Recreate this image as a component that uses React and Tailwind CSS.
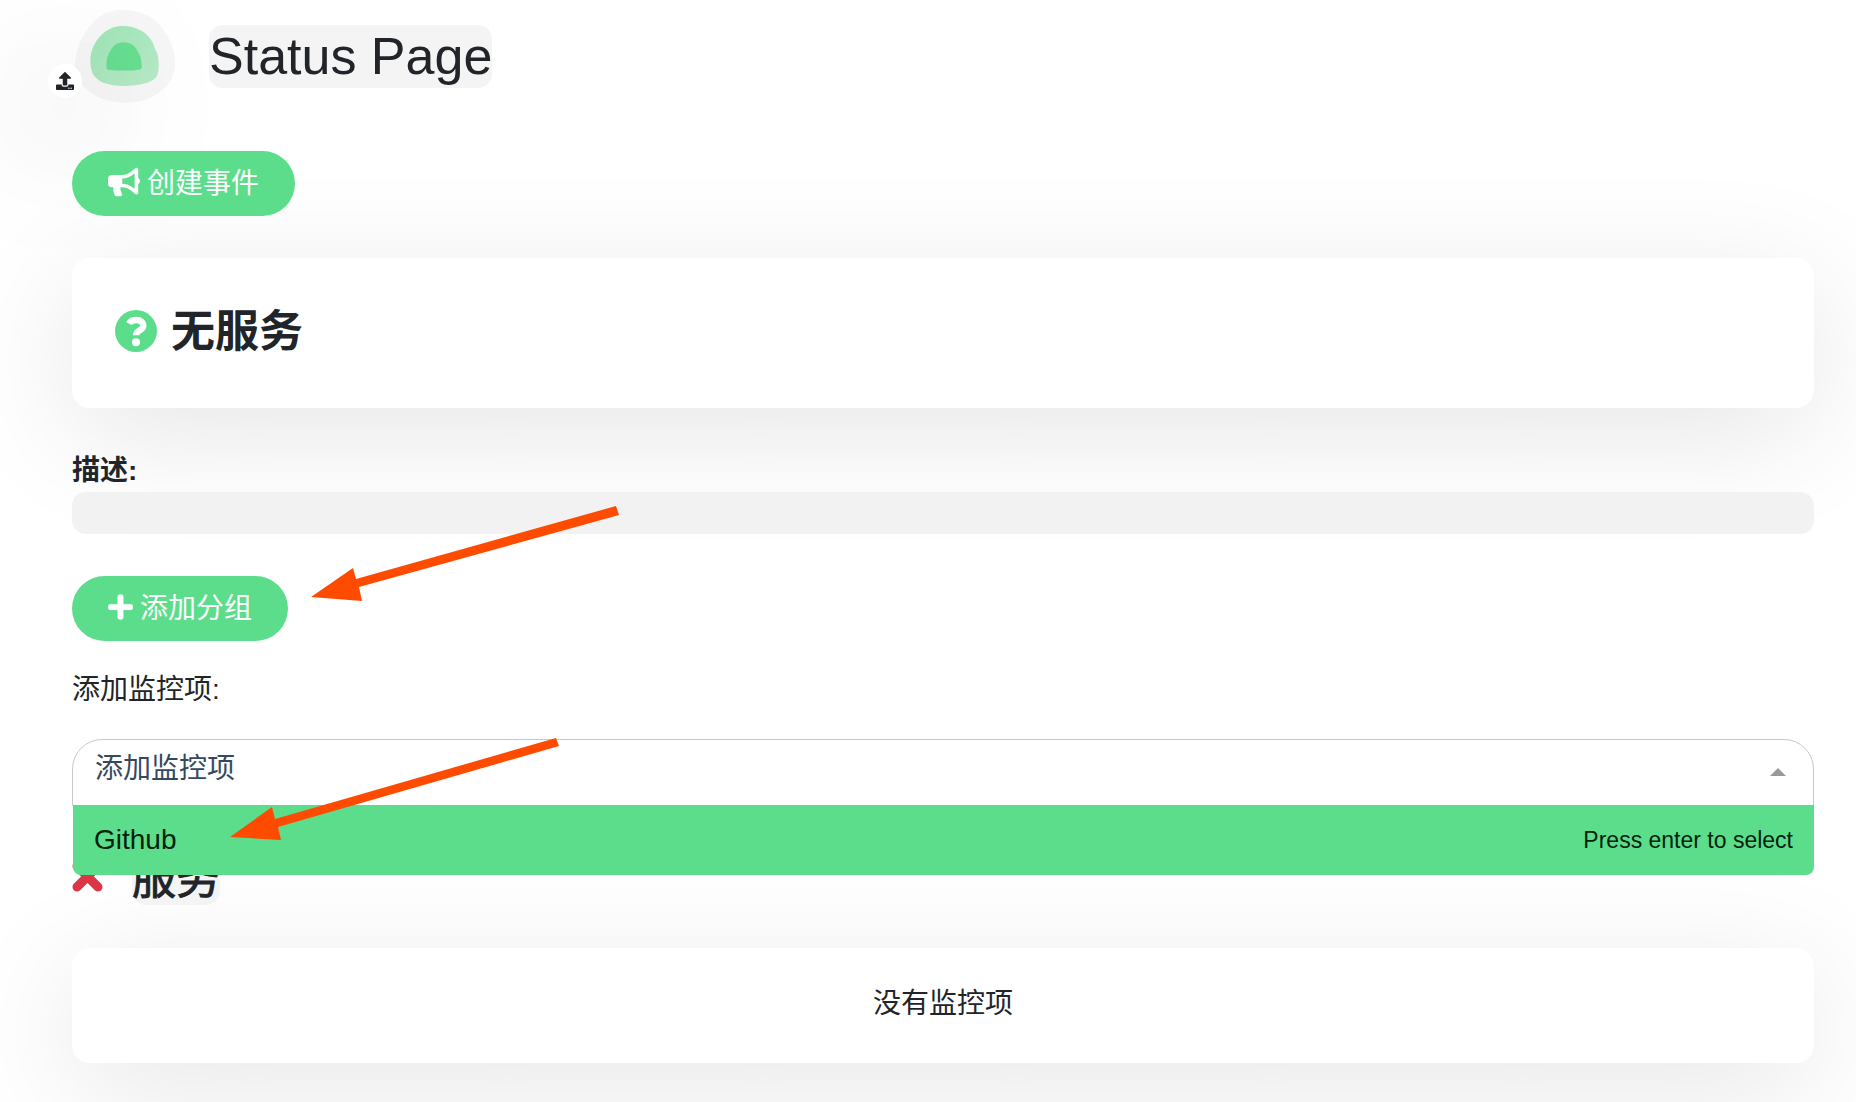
import { FaBullhorn, FaPlus, FaUpload } from "react-icons/fa";

function Logo() {
  return (
    <svg className="h-24 w-[102px]" viewBox="0 0 306 288" aria-hidden="true">
      <defs>
        <linearGradient id="mint" x1="0" y1="0" x2="1" y2="1">
          <stop offset="0" stopColor="#9ee5b5" />
          <stop offset="1" stopColor="#b9eac8" />
        </linearGradient>
      </defs>
      <path d="M146 5C202 5 248 30 272 72C294 102 306 140 303 172C300 208 286 232 258 252C230 274 196 284 156 284C112 284 76 274 48 252C18 232 2 204 3 172C4 136 14 104 34 74C60 30 96 5 146 5Z" fill="#f6f6f6" />
      <path d="M146 54C182 54 212 68 230 94C240 108 240 118 248 132C256 150 256 184 250 202C240 226 188 234 150 234C112 234 80 226 64 208C50 194 44 158 54 126C70 84 102 54 146 54Z" fill="url(#mint)" />
      <path d="M148 103C168 103 182 112 190 128C200 142 204 160 203 180Q202 184 196 185Q150 190 103 185Q98 184 98 180C96 160 100 142 108 130C118 112 130 103 148 103Z" fill="#66de90" />
    </svg>
  );
}

function QuestionIcon() {
  return (
    <svg className="mb-1 size-[42px]" viewBox="0 0 126 126" aria-hidden="true">
      <circle cx="63" cy="63" r="63" fill="#5cdd8b" />
      <path d="M42 41C46 33 54 30 64 30C77 30 85 37 85 47C85 62 63 60 63 76" fill="none" stroke="#fff" strokeWidth="19" />
      <circle cx="63" cy="97" r="12" fill="#fff" />
    </svg>
  );
}

function RemoveIcon() {
  return (
    <svg className="size-[31px]" viewBox="0 0 31 31" aria-hidden="true">
      <path d="M5 5L26 26M26 5L5 26" stroke="currentColor" strokeWidth="9" strokeLinecap="round" />
    </svg>
  );
}

function GroupArrow({ className }) {
  return (
    <svg className={className} viewBox="0 0 310 98" aria-hidden="true">
      <path d="M0 92L42 63L45 74L305 1L308 10L48 82L51 96Z" fill="#ff4b00" />
    </svg>
  );
}

function MonitorArrow({ className }) {
  return (
    <svg className={className} viewBox="0 0 330 106" aria-hidden="true">
      <path d="M0 101L42 71L45 83L326 2L329 10L48 91L51 104Z" fill="#ff4b00" />
    </svg>
  );
}

function PillButton({ children }) {
  return (
    <button type="button" className="relative flex h-[65px] w-fit items-center gap-[7px] rounded-full bg-[#5cdd8b] px-9 text-white">
      {children}
    </button>
  );
}

const card = "rounded-[18px] bg-white shadow-[0_26px_122px_rgba(0,0,0,0.1)]";

export default function App() {
  return (
    <main className="min-h-screen overflow-hidden bg-white pt-2 pr-[42px] pb-10 pl-[72px] font-['Liberation_Sans','Noto_Sans_CJK_SC',sans-serif] text-[28px] leading-[42px] text-[#212529]">
      <header className="flex items-start">
        <button type="button" aria-label="Upload logo" className="relative ml-0.5 rounded-full">
          <Logo />
          <span className="absolute bottom-1.5 -left-[26px] flex size-[34px] items-center justify-center rounded-full bg-white text-[18px] shadow-[0_26px_122px_rgba(0,0,0,0.6)]">
            <FaUpload />
          </span>
        </button>
        <h1 className="mt-[17px] ml-[33px] rounded-[14px] bg-[#f4f4f4] text-[52px] leading-[63px]">Status Page</h1>
      </header>

      <div className="mt-[47px]">
        <PillButton><FaBullhorn className="mb-1 text-[32px]" />创建事件</PillButton>
      </div>

      <section className={`mt-[42px] flex h-[150px] items-center gap-3.5 px-[43px] ${card}`}>
        <QuestionIcon />
        <h2 className="mb-1 text-[44px] leading-[53px] font-bold">无服务</h2>
      </section>

      <section className="relative mt-[42px]">
        <h3 className="font-bold">描述:</h3>
        <div contentEditable suppressContentEditableWarning role="textbox" aria-label="描述" className="h-[42px] rounded-[14px] bg-[#f2f2f2]" />
        <GroupArrow className="absolute top-[55px] left-[239px] h-[98px] w-[310px]" />
      </section>

      <div className="mt-[42px]">
        <PillButton><FaPlus className="mb-1 h-7 w-[25px] stroke-white stroke-[12px]" />添加分组</PillButton>
      </div>

      <section className="mt-7">
        <label htmlFor="monitor">添加监控项:</label>
        <div className="relative z-10 mt-7">
          <div className="flex h-[67px] items-center rounded-t-[30px] border border-[#c8c8c8] pr-[27px] pl-[22px]">
            <input id="monitor" role="combobox" aria-expanded="true" placeholder="添加监控项" className="mb-2 h-[42px] grow bg-transparent outline-none placeholder:text-[#35495e]" />
            <svg className="mb-0.5 h-2 w-4" viewBox="0 0 16 8" aria-hidden="true"><path d="M0 8L8 0L16 8Z" fill="#999999" /></svg>
          </div>
          <ul role="listbox" className="absolute top-[66px] right-0 left-px">
            <li role="option" aria-selected="true" className="flex h-[70px] items-center justify-between rounded-b-[8px] bg-[#5cdd8b] px-[21px] text-[#00210c]">
              <span>Github</span>
              <span className="text-[23px]">Press enter to select</span>
            </li>
          </ul>
          <MonitorArrow className="absolute -top-[3px] left-[158px] h-[106px] w-[330px]" />
        </div>
      </section>

      <section className="mt-[46px]">
        <div className="flex items-center gap-[29px]">
          <button type="button" aria-label="Remove group" className="mb-1 text-[#dc3545]"><RemoveIcon /></button>
          <h2 className="rounded-[14px] bg-[#f4f4f4] text-[44px] leading-[53px] font-normal [-webkit-text-stroke:1px_#212529]">服务</h2>
        </div>
        <div className={`mt-[43px] flex h-[115px] items-center justify-center pb-1 ${card}`}>没有监控项</div>
      </section>
    </main>
  );
}
